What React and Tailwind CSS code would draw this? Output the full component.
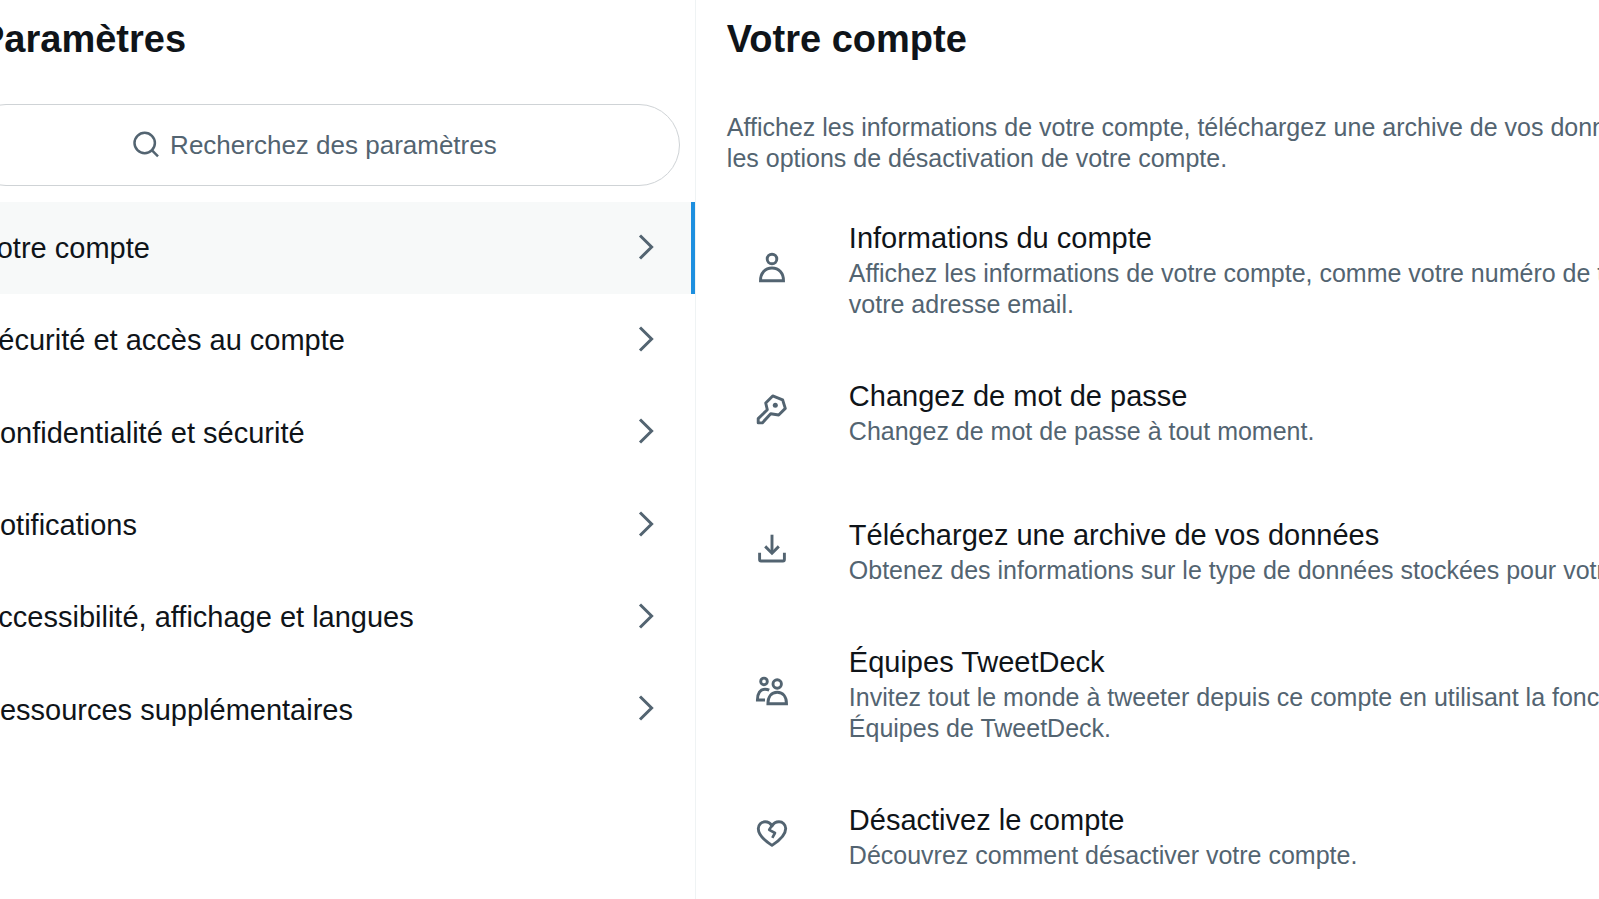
import React from "react";

const sections = [
  { label: "Votre compte", active: true },
  { label: "Sécurité et accès au compte" },
  { label: "Confidentialité et sécurité" },
  { label: "Notifications" },
  { label: "Accessibilité, affichage et langues" },
  { label: "Ressources supplémentaires" },
];

function LineIcon({ children }) {
  return (
    <svg
      viewBox="0 0 36 36"
      className="size-9"
      fill="none"
      stroke="currentColor"
      strokeWidth="2.9"
      strokeLinejoin="round"
      aria-hidden="true"
    >
      {children}
    </svg>
  );
}

const PersonIcon = () => (
  <LineIcon>
    <circle cx="18" cy="9" r="4.8" />
    <path strokeLinejoin="miter" d="M6.5 30.7C6.5 23 11 18 18 18s11.5 5 11.5 12.7Z" />
  </LineIcon>
);

const KeyIcon = () => (
  <LineIcon>
    <path d="M18.7 3.9 28.6 7.8 31.3 16.4 24.7 23 16.7 21.7 8.3 30.9H4.2V26.6L13.3 17.7 11.7 11Z" />
    <circle cx="21.3" cy="13.3" r="2.5" fill="currentColor" stroke="none" />
  </LineIcon>
);

const DownloadIcon = () => (
  <LineIcon>
    <path d="M18 3.7V22" />
    <path strokeLinejoin="miter" d="M11.2 15.4 18 22.2 24.8 15.4" />
    <path d="M5.6 21.8V28.6Q5.6 30 7 30H29Q30.4 30 30.4 28.6V21.8" />
  </LineIcon>
);

const TeamIcon = () => (
  <LineIcon>
    <circle cx="10" cy="7.4" r="3.3" />
    <path strokeLinejoin="miter" d="M11 26H3.4C3.4 19.4 6.2 15.2 11 15.2 12.7 15.2 14 15.5 15.2 16.1" />
    <circle cx="23.2" cy="10" r="4.2" />
    <path strokeLinejoin="miter" d="M13.9 29.8C13.9 22.6 17.4 18.3 23.2 18.3s9.3 4.3 9.3 11.5Z" />
  </LineIcon>
);

const BrokenHeartIcon = () => (
  <LineIcon>
    <path d="M18 29.4C9.5 24 4.3 18.6 4.3 12.6 4.3 8.6 7.3 5.8 11 5.8 14 5.8 16.5 7.3 18 10 19.5 7.3 22 5.8 25 5.8 28.7 5.8 31.7 8.6 31.7 12.6 31.7 18.6 26.5 24 18 29.4Z" />
    <path strokeWidth="2.6" d="M18 9.4 15.2 13.8 21 17 18.3 21.9" />
  </LineIcon>
);

const items = [
  {
    icon: PersonIcon,
    title: "Informations du compte",
    text: "Affichez les informations de votre compte, comme votre numéro de téléphone et votre adresse email.",
  },
  {
    icon: KeyIcon,
    title: "Changez de mot de passe",
    text: "Changez de mot de passe à tout moment.",
    spaced: true,
  },
  {
    icon: DownloadIcon,
    title: "Téléchargez une archive de vos données",
    text: "Obtenez des informations sur le type de données stockées pour votre compte.",
  },
  {
    icon: TeamIcon,
    title: "Équipes TweetDeck",
    text: "Invitez tout le monde à tweeter depuis ce compte en utilisant la fonctionnalité Équipes de TweetDeck.",
  },
  {
    icon: BrokenHeartIcon,
    title: "Désactivez le compte",
    text: "Découvrez comment désactiver votre compte.",
  },
];

function Chevron() {
  return (
    <svg viewBox="0 0 16 26" className="mb-[3px] h-[26px] w-4 text-[#536471]" fill="none" stroke="currentColor" strokeWidth="3" aria-hidden="true">
      <path d="M2 1.5 13.6 13 2 24.5" />
    </svg>
  );
}

export default function App() {
  return (
    <div className="min-h-screen overflow-hidden bg-white font-['Liberation_Sans',Arial,sans-serif] text-[#0f1419]">
      <div className="-mr-[244px] -ml-[50px] grid min-h-screen grid-cols-[39.4%_1fr]">
        <section className="border-r border-[#eff3f4] pt-[17px]" aria-labelledby="settings-title">
          <h1 id="settings-title" className="px-[29px] text-[38px] leading-[44px] font-bold">
            Paramètres
          </h1>
          <label className="mx-[15px] mt-[43px] flex h-[82px] items-center justify-center gap-[10px] rounded-full border border-[#cfd3d6] pr-4 text-[#536471]">
            <svg viewBox="0 0 28 28" className="size-7 shrink-0" fill="none" stroke="currentColor" strokeWidth="2.5" aria-hidden="true">
              <circle cx="12.7" cy="12" r="10.2" />
              <path d="M19.8 19.2 26 25.4" />
            </svg>
            <input
              type="text"
              aria-label="Recherchez des paramètres"
              placeholder="Recherchez des paramètres"
              className="field-sizing-content bg-transparent text-[26px] leading-8 outline-none placeholder:text-[#536471]"
            />
          </label>
          <nav className="mt-4 grid min-h-[554px] auto-rows-fr" aria-label="Paramètres">
            {sections.map((s) => (
              <a
                key={s.label}
                href="#"
                aria-current={s.active ? "page" : undefined}
                className={
                  s.active
                    ? "flex items-center justify-between border-r-4 border-[#1d8fdf] bg-[#f7f9f9] pr-[37px] pl-[29px]"
                    : "flex items-center justify-between border-r-4 border-transparent pr-[37px] pl-[29px]"
                }
              >
                <span className="text-[29px] leading-9">{s.label}</span>
                <Chevron />
              </a>
            ))}
          </nav>
        </section>

        <main className="pt-[17px]">
          <h2 className="px-[31px] text-[38px] leading-[44px] font-bold">Votre compte</h2>
          <p className="mt-[51px] px-[31px] text-[25px] leading-[31px] text-[#536471]">
            Affichez les informations de votre compte, téléchargez une archive de vos données ou découvrez les options de
            désactivation de votre compte.
          </p>
          <div className="mt-4">
            {items.map(({ icon: Icon, title, text, spaced }) => (
              <a
                key={title}
                href="#"
                className={
                  spaced
                    ? "mb-3 flex items-center gap-8 pt-[31px] pr-16 pb-7 pl-[31px]"
                    : "flex items-center gap-8 pt-[31px] pr-16 pb-7 pl-[31px]"
                }
              >
                <span className="flex w-[90px] shrink-0 justify-center pb-1.5 text-[#536471]">
                  <Icon />
                </span>
                <span className="flex flex-col gap-0.5">
                  <span className="text-[29px] leading-[35px]">{title}</span>
                  <span className="text-[25px] leading-[31px] text-[#536471]">{text}</span>
                </span>
              </a>
            ))}
          </div>
        </main>
      </div>
    </div>
  );
}
